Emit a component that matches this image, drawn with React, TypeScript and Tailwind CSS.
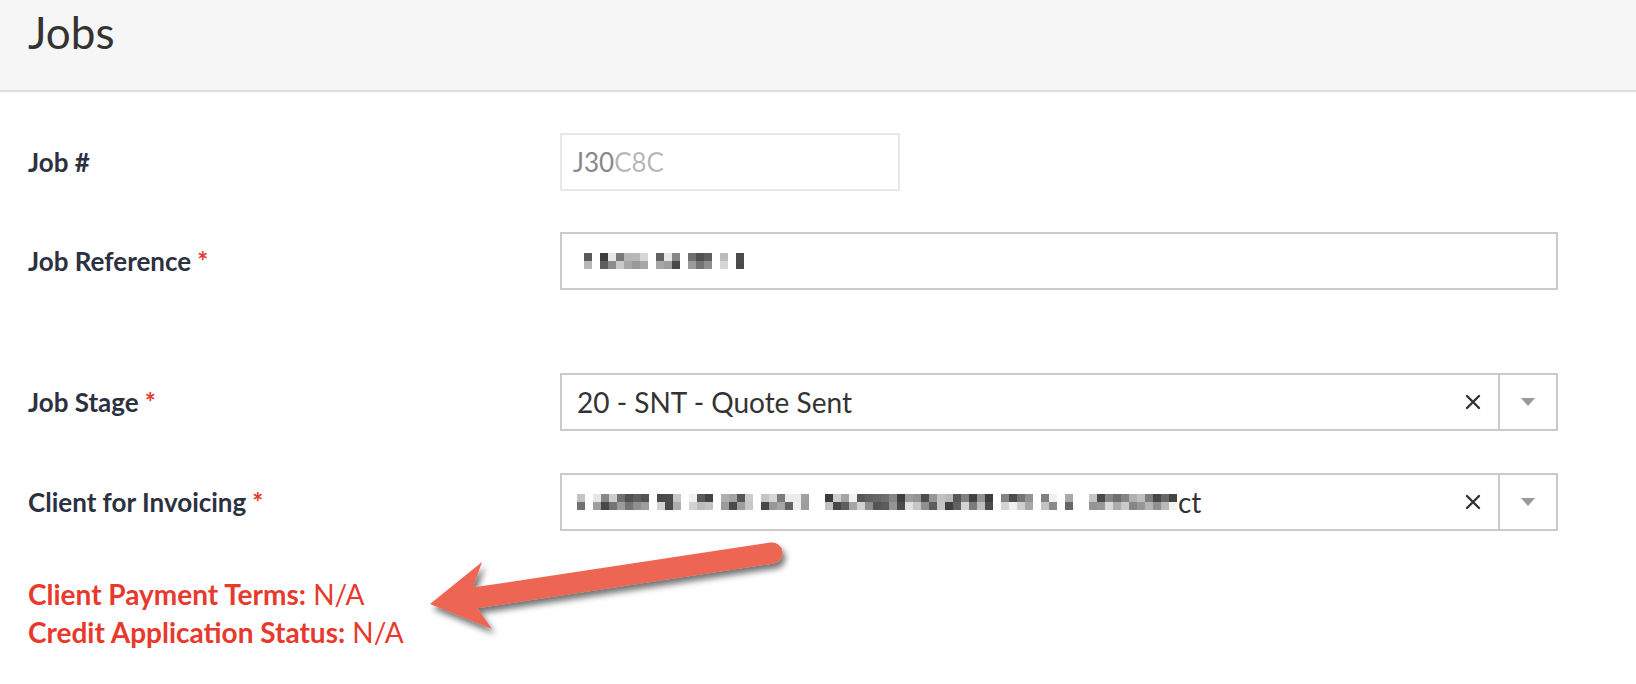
import React from "react";

const font = { fontFamily: "Lato, 'Open Sans', sans-serif" };

// pseudo-random grays for the pixelated (redacted) text
const shade = (seed: number) => {
  const v = Math.abs(Math.sin(seed * 12.9898) * 43758.5453) % 1;
  const g = Math.round(60 + v * 185);
  return `rgb(${g},${g},${g})`;
};

const Mosaic = ({ count, seed, gaps }: { count: number; seed: number; gaps: number[] }) => (
  <div className="flex items-center">
    {Array.from({ length: count }).map((_, i) =>
      gaps.includes(i) ? (
        <div key={i} className="h-[16px] w-[8px]" />
      ) : (
        <div key={i} className="flex flex-col">
          <div className="h-[8px] w-[8px]" style={{ background: shade(seed + i * 3) }} />
          <div className="h-[8px] w-[8px]" style={{ background: shade(seed + i * 3 + 1) }} />
        </div>
      )
    )}
  </div>
);

const Label = ({ text, required }: { text: string; required?: boolean }) => (
  <div className="w-[532px] shrink-0 text-[26px] font-bold text-[#2c3142]">
    {text}
    {required && <span className="ml-[6px] text-[#e8392d]">*</span>}
  </div>
);

const ClearX = () => (
  <svg width="16" height="16" viewBox="0 0 16 16">
    <path d="M2 2 L14 14 M14 2 L2 14" stroke="#333" strokeWidth="2.4" strokeLinecap="round" />
  </svg>
);

const Select = ({ children }: { children: React.ReactNode }) => (
  <div className="flex h-[58px] w-[998px] items-stretch border-2 border-[#cacaca] bg-white">
    <div className="flex flex-1 items-center overflow-hidden pl-[15px] text-[28px] text-[#333]">{children}</div>
    <div className="flex w-[50px] items-center justify-center">
      <ClearX />
    </div>
    <div className="flex w-[58px] items-center justify-center border-l-2 border-[#cacaca]">
      <div className="h-0 w-0 border-x-[7px] border-t-[8px] border-x-transparent border-t-[#999]" />
    </div>
  </div>
);

const Arrow = () => (
  <svg className="pointer-events-none absolute left-0 top-0" width="1636" height="684">
    <defs>
      <filter id="sh" x="-20%" y="-50%" width="140%" height="200%">
        <feDropShadow dx="3" dy="5" stdDeviation="3" floodColor="#000" floodOpacity="0.55" />
      </filter>
    </defs>
    <g filter="url(#sh)" fill="#ec6653">
      <line x1="772" y1="553" x2="474" y2="598" stroke="#ec6653" strokeWidth="21" strokeLinecap="round" />
      <polygon points="430,604 482,562 472,590 478,609 492,629" />
    </g>
  </svg>
);

export default function App() {
  return (
    <div className="relative h-[684px] w-[1636px] overflow-hidden bg-white" style={font}>
      <header className="flex h-[92px] items-center border-b-2 border-[#dddddd] bg-[#f6f6f6] px-[28px] pb-[26px]">
        <h1 className="text-[44px] leading-none text-[#333]">Jobs</h1>
      </header>

      <div className="flex flex-col px-[28px] pt-[41px]">
        <div className="flex items-center">
          <Label text="Job #" />
          <div className="flex h-[58px] w-[340px] items-center border-2 border-[#e8e8e8] pl-[11px] text-[26px] text-[#888]">
            J30<span className="opacity-60">C8C</span>
          </div>
        </div>

        <div className="mt-[41px] flex items-center">
          <Label text="Job Reference" required />
          <div className="flex h-[58px] w-[998px] items-center border-2 border-[#cacaca] pl-[22px]">
            <Mosaic count={21} seed={7} gaps={[1, 8, 12, 16, 18, 20]} />
          </div>
        </div>

        <div className="mt-[83px] flex items-center">
          <Label text="Job Stage" required />
          <Select>20 - SNT - Quote Sent</Select>
        </div>

        <div className="mt-[42px] flex items-center">
          <Label text="Client for Invoicing" required />
          <Select>
            <Mosaic count={75} seed={31} gaps={[1, 9, 13, 17, 22, 29, 30, 52, 57, 60, 62, 63]} />
            <span className="ml-[1px]">ct</span>
          </Select>
        </div>

        <div className="mt-[44px] flex flex-col text-[28px] leading-[38px] text-[#e8392d]">
          <div>
            <span className="font-bold">Client Payment Terms:</span> N/A
          </div>
          <div>
            <span className="font-bold">Credit Application Status:</span> N/A
          </div>
        </div>
      </div>

      <Arrow />
    </div>
  );
}
